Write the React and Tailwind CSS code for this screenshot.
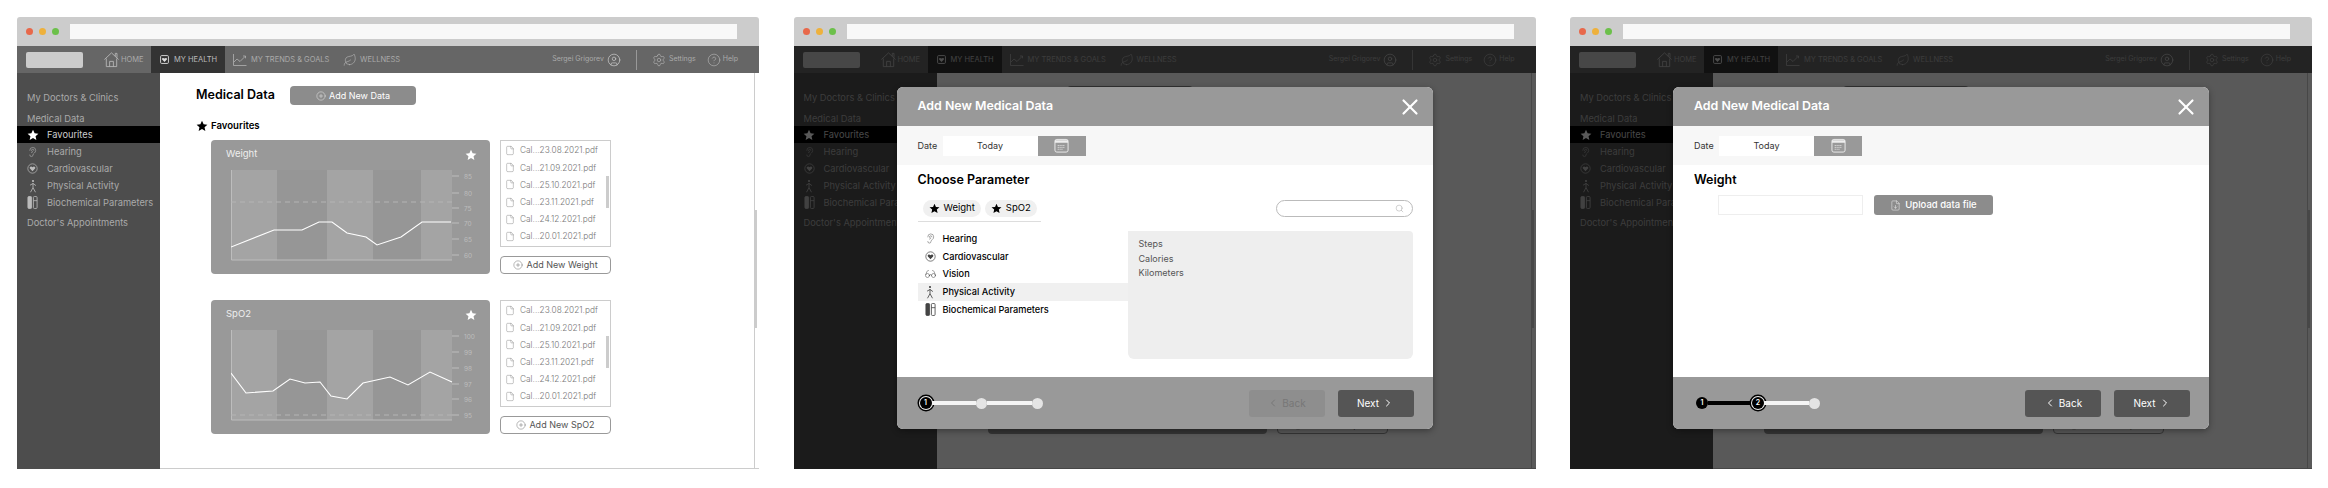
import React from 'react';
import {
  Settings, CircleHelp, CircleUser, Ear, File, CirclePlus, Search, Glasses, Leaf, X,
  ChevronLeft, ChevronRight, FileDown,
} from 'lucide-react';

const files = ['Cal...23.08.2021.pdf', 'Cal...21.09.2021.pdf', 'Cal...25.10.2021.pdf', 'Cal...23.11.2021.pdf', 'Cal...24.12.2021.pdf', 'Cal...20.01.2021.pdf'];

const weightLine = [[0, 77], [43, 60], [71, 60], [88, 52], [101, 52], [116, 63], [135, 67], [146, 75], [170, 67], [191, 52], [220, 52]];
const spo2Line = [[0, 43], [15, 63], [42, 61], [59, 49], [74, 53], [89, 52], [100, 66], [116, 69], [132, 53], [159, 47], [177, 55], [199, 42], [221, 52]];

const StarIcon = ({ className }) => (
  <svg viewBox="0 0 24 24" className={className} fill="currentColor">
    <path d="M12 1.5l3.2 7 7.6.8-5.7 5.1 1.6 7.5L12 18.1l-6.7 3.8 1.6-7.5L1.2 9.3l7.6-.8z" />
  </svg>
);

const HouseIcon = () => (
  <svg viewBox="0 0 18 18" className="w-[17px] h-[17px] mr-[1px] text-[#bbb]" fill="none" stroke="currentColor" strokeWidth="0.9">
    <path d="M1.5 9L9 2l7.5 7M13 5.5V2.5h1.8v4.6M3.5 8v8.5h11V8M7 16.5v-5.5h4v5.5" />
  </svg>
);

const HeartBox = () => (
  <svg viewBox="0 0 16 16" className="w-[9px] h-[11px] text-[#ddd]">
    <rect x="1" y="1" width="14" height="14" rx="2" fill="none" stroke="currentColor" strokeWidth="1.6" />
    <path d="M8 12.5L3.8 8.2C2.4 6.4 4.9 3.8 8 6.2c3.1-2.4 5.6.2 4.2 2z" fill="currentColor" />
  </svg>
);

const TrendIcon = () => (
  <svg viewBox="0 0 14 14" className="w-[14px] h-[14px] text-[#bbb]" fill="none" stroke="currentColor" strokeWidth="0.7">
    <path d="M0.5 1v11.5h13" />
    <path d="M1 9l3-3 3 2.5 5-5M10 3h2.5v2.3" />
  </svg>
);

const HeartCircle = ({ className }) => (
  <svg viewBox="0 0 16 16" className={className} fill="none" stroke="currentColor">
    <circle cx="8" cy="8" r="6.8" />
    <path d="M8 12L4.2 8C3 6.2 5.5 3.9 8 6c2.5-2.1 5 .2 3.8 2z" fill="currentColor" stroke="none" />
  </svg>
);

const WalkerIcon = ({ className }) => (
  <svg viewBox="0 0 12 16" className={className} fill="none" stroke="currentColor" strokeWidth="1">
    <circle cx="6" cy="2" r="1.3" fill="currentColor" stroke="none" />
    <path d="M6 4.5v5.5M6 5l-3.5 2M6 5l3.5 2.5M6 10l-3 5.5M6 10l3 5.5" />
  </svg>
);

const TubesIcon = ({ className }) => (
  <svg viewBox="0 0 12 14" className={className} fill="none" stroke="currentColor" strokeWidth="0.9">
    <rect x="1" y="0.5" width="4" height="13" rx="1" fill="currentColor" />
    <rect x="7" y="0.5" width="4" height="13" rx="1" />
    <path d="M7 5h4" />
  </svg>
);

const CalendarIcon = () => (
  <svg viewBox="0 0 16 16" className="w-[15px] h-[15px] text-[#eeeeee]" fill="none" stroke="currentColor">
    <rect x="1" y="1.5" width="14" height="13.5" rx="2" />
    <path d="M1 2.5h14v2.5H1z" fill="currentColor" stroke="none" />
    <path d="M4 8h8M4 10h8M4 12h6" strokeDasharray="1 1" />
  </svg>
);

const NavTab = ({ icon, label, active, className }) => (
  <div className={`flex items-center h-full ${active ? 'bg-[#333333] text-[#bbbbbb]' : 'text-[#aaaaaa]'} ${className}`}>
    {icon}
    <span className="text-[7.5px] whitespace-nowrap">{label}</span>
  </div>
);

const TopNav = () => (
  <div className="flex items-center h-[27px] bg-[#666666] shrink-0">
    <div className="ml-[9px] w-[57px] h-[16px] rounded-[2px] bg-[#cccccc]" />
    <NavTab className="ml-[20px] w-[48px]" icon={<HouseIcon />} label="HOME" />
    <NavTab active className="w-[74px] pl-[9px] gap-[5px]" icon={<HeartBox />} label="MY HEALTH" />
    <NavTab className="w-[118px] pl-[8px] gap-[4px]" icon={<TrendIcon />} label="MY TRENDS & GOALS" />
    <NavTab className="gap-[3px]" icon={<Leaf className="w-[14px] h-[14px] text-[#bbb]" strokeWidth={1} />} label="WELLNESS" />
    <div className="ml-auto flex items-center h-full text-[#aaaaaa] text-[7px]">
      <span className="whitespace-nowrap">Sergei Grigorev</span>
      <CircleUser className="ml-[3px] w-[14px] h-[14px] text-[#ccc]" strokeWidth={1.2} />
      <div className="mx-[15px] w-px h-[20px] bg-[#999999]" />
      <Settings className="w-[14px] h-[14px] text-[#bbb]" strokeWidth={1} />
      <span className="ml-[3px]">Settings</span>
      <CircleHelp className="ml-[11px] w-[14px] h-[14px] text-[#bbb]" strokeWidth={1} />
      <span className="ml-[2px] mr-[21px]">Help</span>
    </div>
  </div>
);

const SideItem = ({ icon, label, active }) => (
  <div className={`flex items-center h-[17px] text-[9.3px] whitespace-nowrap ${active ? 'bg-black text-[#cccccc]' : 'text-[#aaaaaa]'}`}>
    <span className="w-[30px] flex justify-center pl-[1px] text-[#bbbbbb]">{icon}</span>
    {label}
  </div>
);

const Sidebar = () => (
  <div className="w-[143px] shrink-0 bg-[#4d4d4d] pt-[17px] text-[9.3px] text-[#aaaaaa]">
    <div className="pl-[10px] h-[16px] leading-[16px]">My Doctors &amp; Clinics</div>
    <div className="pl-[10px] mt-[4px] h-[16px] leading-[17px]">Medical Data</div>
    <SideItem active icon={<StarIcon className="w-[12px] h-[12px] text-white" />} label="Favourites" />
    <SideItem icon={<Ear className="w-[11px] h-[12px]" strokeWidth={1.2} />} label="Hearing" />
    <SideItem icon={<HeartCircle className="w-[11px] h-[11px]" />} label="Cardiovascular" />
    <SideItem icon={<WalkerIcon className="w-[10px] h-[14px]" />} label="Physical Activity" />
    <SideItem icon={<TubesIcon className="w-[11px] h-[13px]" />} label="Biochemical Parameters" />
    <div className="pl-[10px] mt-[2px] h-[20px] leading-[20px]">Doctor's Appointments</div>
  </div>
);

const Chart = ({ line, labels, labelY, dashY }) => (
  <svg viewBox="0 -8 255 104" className="ml-[20px] w-[255px] h-[104px] block">
    <rect x="0" y="0" width="220" height="90" fill="#969696" />
    <rect x="0" y="0" width="46" height="90" fill="#a4a4a4" />
    <rect x="96" y="0" width="46" height="90" fill="#a4a4a4" />
    <rect x="190" y="0" width="31" height="90" fill="#a4a4a4" />
    <path d="M0.5 0V90H221" fill="none" stroke="#bdbdbd" />
    <line x1="0" x2="221" y1={dashY} y2={dashY} stroke="#b4b4b4" strokeDasharray="5 4" />
    <polyline points={line.map((p) => p.join(',')).join(' ')} fill="none" stroke="#ffffff" strokeWidth="1.1" />
    {labels.map((label, i) => (
      <g key={label}>
        <line x1="221" x2="228" y1={labelY[i]} y2={labelY[i]} stroke="#bdbdbd" />
        <text x="233" y={labelY[i] + 2.5} fontSize="6.5" fill="#bdbdbd">{label}</text>
      </g>
    ))}
  </svg>
);

const DataRow = ({ title, buttonLabel, line, labels, labelY, dashY }) => (
  <div className="flex ml-[15px] h-[134px]">
    <div className="w-[279px] rounded-[4px] bg-[#999999]">
      <div className="flex items-center justify-between pl-[15px] pr-[13px] h-[22px] pt-[7px] text-[9.5px] text-[#eeeeee]">
        {title}
        <StarIcon className="w-[12px] h-[12px] text-white" />
      </div>
      <Chart line={line} labels={labels} labelY={labelY} dashY={dashY} />
    </div>
    <div className="ml-[10px] w-[111px] flex flex-col justify-between">
      <div className="relative h-[107px] border border-[#cccccc] pt-[1px]">
        {files.map((f) => (
          <div key={f} className="flex items-center h-[17.2px] pl-[4px] gap-[5px] text-[8.3px] font-light text-[#777777] whitespace-nowrap">
            <File className="w-[10px] h-[13px] shrink-0" strokeWidth={1} />
            {f}
          </div>
        ))}
        <div className="absolute right-[1px] top-[35px] w-[3px] h-[32px] bg-[#cccccc]" />
      </div>
      <div className="flex items-center justify-center gap-[3px] h-[18px] rounded-[4px] border border-[#999999] text-[9px] text-[#555555]">
        <CirclePlus className="w-[10px] h-[10px]" strokeWidth={1} />
        {buttonLabel}
      </div>
    </div>
  </div>
);

const MainContent = () => (
  <div className="relative flex-1 bg-white pt-[13px] pl-[36px] border-b border-[#cccccc]">
    <div className="flex items-center h-[19px]">
      <h1 className="w-[94px] text-[12.5px] font-semibold text-black whitespace-nowrap">Medical Data</h1>
      <div className="flex items-center justify-center gap-[3px] w-[126px] h-[19px] rounded-[4px] bg-[#8c8c8c] text-[9px] text-white">
        <CirclePlus className="w-[10px] h-[10px]" strokeWidth={1} />
        Add New Data
      </div>
    </div>
    <div className="flex items-center gap-[3px] mt-[15px] h-[12px] text-[9.6px] font-semibold text-black">
      <StarIcon className="w-[12px] h-[12px]" />
      Favourites
    </div>
    <div className="mt-[8px] flex flex-col gap-[26px]">
      <DataRow title="Weight" buttonLabel="Add New Weight" line={weightLine} labels={[85, 80, 75, 70, 65, 60]} labelY={[6, 23, 38, 53, 69, 85]} dashY={32} />
      <DataRow title="SpO2" buttonLabel="Add New SpO2" line={spo2Line} labels={[100, 99, 98, 97, 96, 95]} labelY={[6, 22, 38, 54, 69, 85]} dashY={85} />
    </div>
    {/* page scrollbar */}
    <div className="absolute right-[4px] top-0 bottom-0 w-px bg-[#cccccc]" />
    <div className="absolute right-[2px] top-[137px] w-[3px] h-[118px] bg-[#cccccc]" />
  </div>
);

const StepNode = ({ n, step }) => {
  if (n === step) {
    return (
      <div className="flex items-center justify-center w-[12px] h-[12px] rounded-full bg-black text-white text-[7px] font-semibold shrink-0 shadow-[0_0_0_1px_#eeeeee,0_0_0_2.5px_#000000]">
        {n}
      </div>
    );
  }
  if (n < step) {
    return <div className="flex items-center justify-center w-[12px] h-[12px] rounded-full bg-black text-white text-[7px] font-semibold shrink-0">{n}</div>;
  }
  return <div className="w-[11px] h-[11px] rounded-full bg-[#e4e4e4] shrink-0" />;
};

const Stepper = ({ step }) => (
  <div className="flex items-center">
    <StepNode n={1} step={step} />
    <div className={`w-[44px] h-[4px] ${step > 1 ? 'bg-black' : 'bg-[#f4f4f4]'}`} />
    <StepNode n={2} step={step} />
    <div className="w-[45px] h-[4px] bg-[#f4f4f4]" />
    <StepNode n={3} step={step} />
  </div>
);

const parameters = [
  { name: 'Hearing', icon: <Ear className="w-[11px] h-[13px]" strokeWidth={1} /> },
  { name: 'Cardiovascular', icon: <HeartCircle className="w-[11px] h-[11px]" /> },
  { name: 'Vision', icon: <Glasses className="w-[15px] h-[12px]" strokeWidth={1} /> },
  { name: 'Physical Activity', icon: <WalkerIcon className="w-[10px] h-[14px]" />, active: true },
  { name: 'Biochemical Parameters', icon: <TubesIcon className="w-[11px] h-[13px]" /> },
];

const Chip = ({ label }) => (
  <div className="flex items-center gap-[4px] h-[17px] px-[6px] rounded-full bg-[#f0f0f0] text-[9.5px] text-black">
    <StarIcon className="w-[11px] h-[11px]" />
    {label}
  </div>
);

const ChooseParameter = () => (
  <div className="pl-[21px] pr-[20px] pt-[6px]">
    <h2 className="h-[18px] leading-[18px] text-[12.5px] font-semibold text-black">Choose Parameter</h2>
    <div className="flex justify-between mt-[11px] h-[22px]">
      <div className="flex gap-[4px] w-[123px] pl-[5px] border-b border-[#dddddd]">
        <Chip label="Weight" />
        <Chip label="SpO2" />
      </div>
      <div className="flex items-center justify-end w-[137px] h-[17px] pr-[8px] rounded-full border border-[#bbbbbb]">
        <Search className="w-[9px] h-[9px] text-[#888]" strokeWidth={1} />
      </div>
    </div>
    <div className="flex">
      <div className="w-[210px] pt-[8px]">
        {parameters.map((p) => (
          <div key={p.name} className={`flex items-center h-[17.7px] text-[9.2px] font-medium text-black whitespace-nowrap ${p.active ? 'bg-[#f0f0f0]' : ''}`}>
            <span className="w-[25px] flex justify-center text-[#444]">{p.icon}</span>
            {p.name}
          </div>
        ))}
      </div>
      <div className="flex-1 mt-[9px] h-[128px] rounded-b-[6px] rounded-tr-[4px] bg-[#eeeeee] pl-[11px] pt-[6px] text-[9px] leading-[14.5px] text-[#555555]">
        <div>Steps</div>
        <div>Calories</div>
        <div>Kilometers</div>
      </div>
    </div>
  </div>
);

const WeightStep = () => (
  <div className="pl-[21px] pt-[6px]">
    <h2 className="h-[18px] leading-[18px] text-[12.5px] font-semibold text-black">Weight</h2>
    <div className="flex items-center mt-[6px] pl-[24px]">
      <div className="w-[145px] h-[20px] bg-white border border-[#eeeeee]" />
      <div className="ml-[11px] flex items-center justify-center gap-[4px] w-[119px] h-[20px] rounded-[3px] bg-[#8c8c8c] text-[9.5px] font-medium text-white">
        <FileDown className="w-[11px] h-[11px]" strokeWidth={1} />
        Upload data file
      </div>
    </div>
  </div>
);

const Modal = ({ step }) => (
  <div className="absolute left-[103px] top-[70px] w-[536px] h-[342px] rounded-[6px] overflow-hidden flex flex-col bg-white shadow-[0_2px_6px_rgba(0,0,0,0.35)]">
    <div className="flex items-center justify-between h-[39px] shrink-0 bg-[#999999] pl-[21px] pr-[9px]">
      <span className="text-[12.4px] font-semibold text-white">Add New Medical Data</span>
      <X className="w-[28px] h-[26px] text-white" strokeWidth={2} />
    </div>
    <div className="flex items-center h-[39px] shrink-0 bg-[#f7f7f7] pl-[21px]">
      <span className="w-[25px] text-[9px] text-[#333333]">Date</span>
      <div className="flex items-center justify-center w-[95px] h-[20px] bg-white text-[9px] text-[#333333]">Today</div>
      <div className="flex items-center justify-center w-[48px] h-[20px] bg-[#999999]">
        <CalendarIcon />
      </div>
    </div>
    <div className="flex-1">{step === 1 ? <ChooseParameter /> : <WeightStep />}</div>
    <div className="flex items-center justify-between h-[52px] shrink-0 bg-[#999999] pl-[23px] pr-[19px]">
      <Stepper step={step} />
      <div className="flex gap-[13px]">
        <div className={`flex items-center justify-center gap-[3px] w-[76px] h-[27px] rounded-[3px] text-[10px] ${step > 1 ? 'bg-[#555555] text-white' : 'bg-[#8e8e8e] text-[#777777]'}`}>
          <ChevronLeft className="w-[12px] h-[12px]" />
          Back
        </div>
        <div className="flex items-center justify-center gap-[3px] w-[76px] h-[27px] rounded-[3px] bg-[#555555] text-[10px] text-white">
          Next
          <ChevronRight className="w-[12px] h-[12px]" />
        </div>
      </div>
    </div>
  </div>
);

const BrowserWindow = ({ step }) => (
  <div className="relative w-[742px] h-[452px] shrink-0 flex flex-col">
    <div className="flex items-center h-[29px] shrink-0 rounded-t-[3px] bg-[#cccccc] pl-[9px] pr-[22px]">
      <div className="flex gap-[6px] w-[44px]">
        <span className="w-[7px] h-[7px] rounded-full bg-[#e8684a]" />
        <span className="w-[7px] h-[7px] rounded-full bg-[#eeb13c]" />
        <span className="w-[7px] h-[7px] rounded-full bg-[#6cc04a]" />
      </div>
      <div className="flex-1 h-[15px] bg-[#f8f8f8]" />
    </div>
    <TopNav />
    <div className="flex flex-1 min-h-0">
      <Sidebar />
      <MainContent />
    </div>
    {step > 0 && (
      <>
        <div className="absolute left-0 right-0 top-[29px] bottom-0 bg-black/65" />
        <Modal step={step} />
      </>
    )}
  </div>
);

export default function App() {
  return (
    <div className="flex gap-[34.5px] w-[2328px] h-[488px] pl-[17px] pt-[17px] bg-white font-['Inter',sans-serif] overflow-hidden">
      <BrowserWindow step={0} />
      <BrowserWindow step={1} />
      <BrowserWindow step={2} />
    </div>
  );
}
